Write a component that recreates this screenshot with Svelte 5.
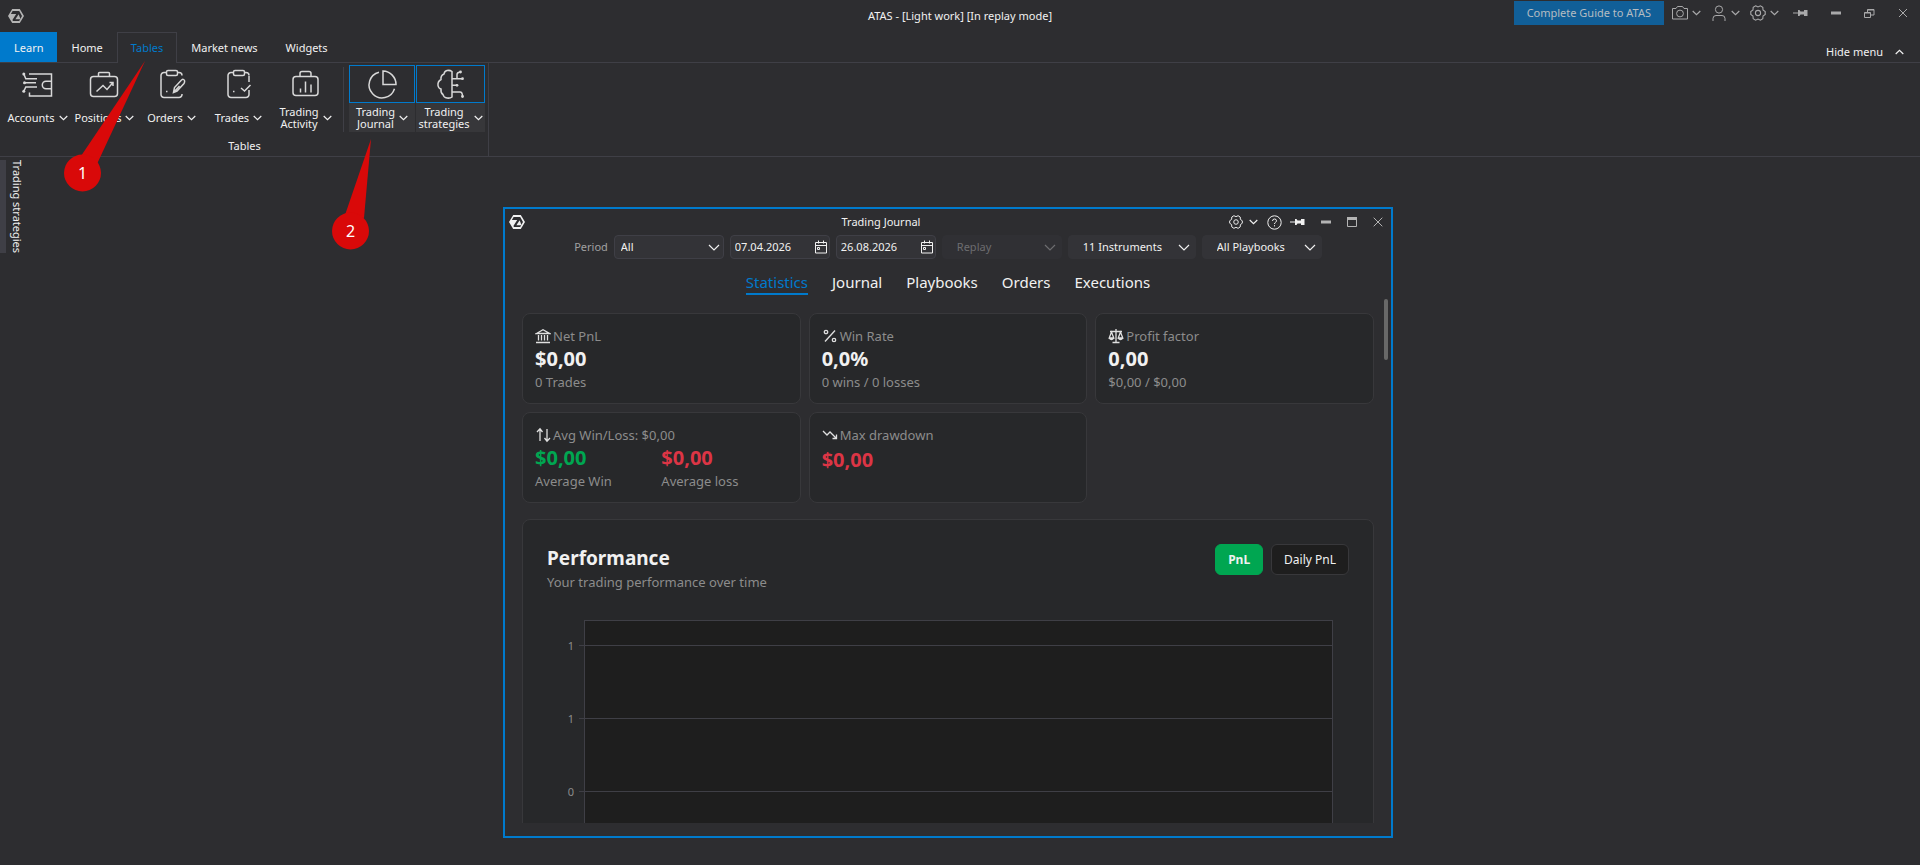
<script>
  const menuTabs = ["Learn", "Home", "Tables", "Market news", "Widgets"];
  const tables = [
    { icon: "accounts", lines: ["Accounts"] },
    { icon: "positions", lines: ["Positions"] },
    { icon: "orders", lines: ["Orders"] },
    { icon: "trades", lines: ["Trades"] },
    { icon: "activity", lines: ["Trading", "Activity"] },
  ];
  const panels = [
    { icon: "journal", lines: ["Trading", "Journal"] },
    { icon: "strategies", lines: ["Trading", "strategies"] },
  ];
  const journalTabs = ["Statistics", "Journal", "Playbooks", "Orders", "Executions"];
  const cards = [
    { icon: "bank", title: "Net PnL", value: "$0,00", note: "0 Trades" },
    { icon: "percent", title: "Win Rate", value: "0,0%", note: "0 wins / 0 losses" },
    { icon: "scales", title: "Profit factor", value: "0,00", note: "$0,00 / $0,00" },
  ];
  const charts = ["PnL", "Daily PnL"];
  // The last row closes the plot and has no label
  const ticks = ["1", "1", "0", ""];

  let menuTab = $state("Tables");
  let journalTab = $state("Statistics");
  let chart = $state("PnL");
  let dateFrom = $state("07.04.2026");
  let dateTo = $state("26.08.2026");
</script>

{#snippet chevron()}
  <svg class="chevron" width="9" height="6" viewBox="0 0 9 6"><path d="M.7 1 4.5 4.6 8.3 1" /></svg>
{/snippet}

{#snippet selectArrow()}
  <svg class="chevron" width="12" height="7" viewBox="0 0 12 7"><path d="M1 1l5 5 5-5" /></svg>
{/snippet}

{#snippet logo()}
  <svg class="logo" width="16" height="14" viewBox="0 0 16 14">
    <path class="fill" d="M4.2 0h7.6L16 7l-4.2 7H4.2L0 7z" />
    <path class="hole" d="M4.600 2h6.600L14 7l-2.800 5H5L4.400 11 8.200 5H2.900z" />
    <path class="fill" d="M7.400 10.300 10.600 5.300l2 5z" />
  </svg>
{/snippet}

{#snippet gear(size)}
  <svg class="thin" width={size} height={size} viewBox="0 0 16 16">
    <path d="M5.600.8 8 1.900l2.400-1.100 2.400 1.500.2 2.700 2.200 1.600v2.800L13 11l-.2 2.700-2.400 1.500L8 14.100l-2.400 1.100-2.400-1.500L3 11 .8 9.400V6.600L3 5l.2-2.700z" />
    <circle cx="8" cy="8" r="2.600" />
  </svg>
{/snippet}

{#snippet pin()}
  <svg width="15" height="10" viewBox="0 0 15 10">
    <path class="fill" d="M0 4.500h5V2h1.500l1 1.500H11V2h3.500v6H11V6.500H7.500L6.500 8H5V5.500H0z" />
  </svg>
{/snippet}

{#snippet ribbonIcon(name)}
  <svg width="32" height="32" viewBox="0 0 32 32">
    {#if name === "accounts"}
      <path d="M7 6h22.500v7.300M29.500 20.700V28H7.500v-3.500M1.800 6l2 4.700H15M2.500 14.700H14M1.800 23.300l2-4.300H15M29.500 13.300h-5.500a3.700 3.700 0 0 0 0 7.400h5.500z" />
      <circle class="fill" cx="1.800" cy="6" r="1.500" />
      <circle class="fill" cx="2.500" cy="14.700" r="1.500" />
      <circle class="fill" cx="1.800" cy="23.300" r="1.500" />
    {:else if name === "positions"}
      <rect x="1.500" y="8.500" width="27" height="20" rx="3" />
      <path d="M9.500 8.500V5.500a1 1 0 0 1 1-1h9a1 1 0 0 1 1 1v3M7.500 23.500l6.500-6 4 4 6-7M20.500 14.500H24V18" />
    {:else if name === "orders" || name === "trades"}
      <path d="M10.500 4.500H8A3 3 0 0 0 5 7.500v19a3 3 0 0 0 3 3h15a3 3 0 0 0 3-3V26M21.500 4.500H23a3 3 0 0 1 3 3" />
      <rect x="10.500" y="2.500" width="11" height="5" rx="1.500" />
      <path d="M10 23.500h1.500" />
      {#if name === "orders"}
        <path d="m17.500 24.500 1-5 7-7.500q2-1.500 3 .5.500 1.500-.500 3L21 23zM17.500 24.500l6-6.500" />
      {:else}
        <path d="M26 8v6M26 22v4M18 20l3.500 3 6-6" />
      {/if}
    {:else if name === "activity"}
      <rect x="3" y="8.500" width="25" height="19" rx="3" />
      <path d="M10 8V5.500a2 2 0 0 1 2-2h7a2 2 0 0 1 2 2V8M10.500 20.500v4M15.500 13.500v11M21 16.500v8" />
    {:else if name === "journal"}
      <path d="M13 4.200a13 13 0 1 0 15.500 16.500M17 3v13.500h13A13.500 13.500 0 0 0 17 3z" />
    {:else}
      <path d="M17 3.500q-2-1.500-5-1-2.500.5-3 3.500-3.500 1.500-3 5.500-3.500 2-3 6 .5 3 3 3.500-.5 4 2 5.500.5 3 4 3.500 3 .5 5-1zM17 10.700h10M17 17.300h5M17 24h8q2.500 0 2.500 4.500M22 10.700V6.500q0-2 3-2.500" />
      <circle class="fill" cx="25.500" cy="4" r="1.400" />
      <circle class="fill" cx="27.500" cy="10.700" r="1.400" />
      <circle class="fill" cx="22" cy="17.300" r="1.400" />
      <circle class="fill" cx="27.500" cy="28.500" r="1.400" />
    {/if}
  </svg>
{/snippet}

{#snippet cardIcon(name)}
  <svg class="card-icon" width="16" height="16" viewBox="0 0 16 16">
    {#if name === "bank"}
      <path d="M1.500 5.500 8 1.800l6.500 3.700zM3.500 7v5.500M6.500 7v5.500M9.500 7v5.500M12.500 7v5.500M1 14.500h14" />
    {:else if name === "percent"}
      <path d="M13 2.500 3 13.500" />
      <circle cx="4" cy="4" r="1.700" />
      <circle cx="12" cy="12" r="1.700" />
    {:else if name === "scales"}
      <path d="M8 1v13M4.500 14.500h7M2 3.500h12M3.500 4 1.200 10h4.600zM12.500 4l-2.300 6h4.600zM1.200 10q2.300 3 4.600 0M10.200 10q2.300 3 4.600 0" />
    {:else if name === "updown"}
      <path d="M5 14V2M2 5l3-3.200L7.500 5M12 2v12M9.500 11l2.500 3.200L15 11" />
    {:else}
      <path d="m1 4 4 4 3-3 6.500 6.500M14.500 7.500v4h-4" />
    {/if}
  </svg>
{/snippet}

{#snippet ribbonButton(item, open)}
  <button class="tool" class:open>
    <span class="tool-icon">{@render ribbonIcon(item.icon)}</span>
    <span class="tool-label">
      <span>
        {#each item.lines as line}
          <span class="line">{line}</span>
        {/each}
      </span>
      {@render chevron()}
    </span>
  </button>
{/snippet}

{#snippet calendar()}
  <svg width="14" height="14" viewBox="0 0 14 14">
    <path d="M1.500 2.500h11v10.500h-11zM1.500 5.500h11M4.500.5v3M9.500.5v3M3.500 7.500h2v2h-2z" />
  </svg>
{/snippet}

<div class="app">
  <header class="titlebar">
    <div class="brand">{@render logo()}</div>
    <div class="title">ATAS - [Light work] [In replay mode]</div>
    <div class="actions">
      <a class="guide" href="#guide">Complete Guide to ATAS</a>
      <button aria-label="Screenshot">
        <svg width="16" height="16" viewBox="0 0 16 16">
          <path d="M.5 3.500H4L5.500 1.500h5l1.500 2h3.500V14H.500z" />
          <circle cx="8" cy="8.500" r="3.400" />
        </svg>
        {@render chevron()}
      </button>
      <button aria-label="Profile">
        <svg width="16" height="16" viewBox="0 0 16 16">
          <circle cx="8" cy="4.500" r="3.600" />
          <path d="M2 16v-2.500q0-3 3-3h6q3 0 3 3V16" />
        </svg>
        {@render chevron()}
      </button>
      <button aria-label="Settings">{@render gear(16)}{@render chevron()}</button>
      <div class="system">
        <button aria-label="Pin">{@render pin()}</button>
        <button aria-label="Minimize">
          <svg width="10" height="10" viewBox="0 0 10 10"><path class="fill" d="M0 3.500h10v3H0z" /></svg>
        </button>
        <button aria-label="Restore">
          <svg width="11" height="11" viewBox="0 0 11 11"><path d="M.5 4.500h6v5h-6zM.5 5h6M3.500 4V1.500h6.500v5.500H7M3.500 2H10" /></svg>
        </button>
        <button aria-label="Close">
          <svg width="10" height="10" viewBox="0 0 10 10"><path d="m1 1 8 8M9 1 1 9" /></svg>
        </button>
      </div>
    </div>
  </header>

  <nav class="menu">
    {#each menuTabs as name}
      <button
        class="menu-tab"
        class:learn={name === "Learn"}
        class:selected={menuTab === name}
        onclick={() => (menuTab = name)}>{name}</button
      >
    {/each}
    <button class="hide-menu">
      Hide menu
      <svg class="chevron" width="9" height="6" viewBox="0 0 9 6"><path d="M.7 5 4.500 1.400 8.300 5" /></svg>
    </button>
  </nav>

  <section class="ribbon">
    <div class="group">
      <div class="tools">
        {#each tables as item}
          {@render ribbonButton(item, false)}
        {/each}
        <div class="separator"></div>
        {#each panels as item}
          {@render ribbonButton(item, true)}
        {/each}
      </div>
      <div class="caption">Tables</div>
    </div>
  </section>

  <aside class="side-panel"><button>Trading strategies</button></aside>

  <section class="window">
    <header class="window-bar">
      {@render logo()}
      <div class="window-title">Trading Journal</div>
      <button class="settings" aria-label="Journal settings">{@render gear(14)}{@render chevron()}</button>
      <button class="help" aria-label="Help">
        <svg width="15" height="15" viewBox="0 0 15 15">
          <circle cx="7.500" cy="7.500" r="6.700" />
          <path d="M5.500 6q0-2 2-2t2 1.800q0 1-1 1.500T7.500 9M7.500 10.200v1.200" />
        </svg>
      </button>
      <button class="window-pin" aria-label="Pin journal">{@render pin()}</button>
      <div class="window-buttons">
        <button aria-label="Minimize journal">
          <svg width="10" height="10" viewBox="0 0 10 10"><path class="fill" d="M0 3.500h10v3H0z" /></svg>
        </button>
        <button aria-label="Maximize journal">
          <svg width="10" height="10" viewBox="0 0 10 10"><path d="M.5.5h9v9h-9z" /><path class="fill" d="M0 0h10v3H0z" /></svg>
        </button>
        <button aria-label="Close journal">
          <svg width="10" height="10" viewBox="0 0 10 10"><path d="m.7.7 8.600 8.600M9.300.7.7 9.300" /></svg>
        </button>
      </div>
    </header>

    <form class="filters">
      <label for="period">Period</label>
      <div class="field period">
        <select id="period"><option>All</option></select>
        {@render selectArrow()}
      </div>
      <div class="field date">
        <input type="text" aria-label="From" bind:value={dateFrom} />
        <button type="button" aria-label="Choose start date">{@render calendar()}</button>
      </div>
      <div class="field date">
        <input type="text" aria-label="To" bind:value={dateTo} />
        <button type="button" aria-label="Choose end date">{@render calendar()}</button>
      </div>
      <div class="field flat disabled">
        <select aria-label="Account" disabled><option>Replay</option></select>
        {@render selectArrow()}
      </div>
      <div class="field flat instruments">
        <select aria-label="Instruments"><option>11 Instruments</option></select>
        {@render selectArrow()}
      </div>
      <div class="field flat">
        <select aria-label="Playbooks"><option>All Playbooks</option></select>
        {@render selectArrow()}
      </div>
    </form>

    <nav class="journal-tabs">
      {#each journalTabs as name}
        <button class:selected={journalTab === name} onclick={() => (journalTab = name)}>{name}</button>
      {/each}
    </nav>

    <div class="body">
      <div class="scrollbar"></div>
      <div class="cards">
        {#each cards as card}
          <article class="card">
            <h3>{@render cardIcon(card.icon)}{card.title}</h3>
            <strong>{card.value}</strong>
            <p>{card.note}</p>
          </article>
        {/each}
        <article class="card">
          <h3>{@render cardIcon("updown")}Avg Win/Loss: $0,00</h3>
          <div class="split">
            <div>
              <strong class="win">$0,00</strong>
              <p>Average Win</p>
            </div>
            <div>
              <strong class="loss">$0,00</strong>
              <p>Average loss</p>
            </div>
          </div>
        </article>
        <article class="card drawdown">
          <h3>{@render cardIcon("drawdown")}Max drawdown</h3>
          <strong class="loss">$0,00</strong>
        </article>
      </div>

      <section class="performance">
        <div class="performance-head">
          <div>
            <h2>Performance</h2>
            <p>Your trading performance over time</p>
          </div>
          <div class="switch">
            {#each charts as name}
              <button class:selected={chart === name} onclick={() => (chart = name)}>{name}</button>
            {/each}
          </div>
        </div>
        <div class="chart">
          {#each ticks as tick}
            <div class="chart-row">
              <span class="tick-label">{tick}</span>
              <span class="tick"></span>
              <div class="plot"></div>
            </div>
          {/each}
        </div>
      </section>
    </div>
  </section>

  <!-- Numbered callouts pointing at the tab and the journal button -->
  <svg class="callout first" width="84" height="132" viewBox="0 0 84 132">
    <path d="M81 0 17 95l16 8z" />
    <circle cx="18.500" cy="112" r="18.500" />
    <text x="18.500" y="118">1</text>
  </svg>
  <svg class="callout second" width="40" height="112" viewBox="0 0 40 112">
    <path d="M39 0 13 76l19 3z" />
    <circle cx="18.500" cy="92" r="18.500" />
    <text x="18.500" y="98">2</text>
  </svg>
</div>

<style>
  :global(body) {
    background: #2d2d30;
  }

  .app {
    position: relative;
    min-height: 100vh;
    overflow: hidden;
    background: #2d2d30;
    color: #f1f1f1;
    font-family: "Noto Sans", "Open Sans", sans-serif;
    font-size: 11px;
    line-height: 16px;
  }

  button,
  input,
  select {
    margin: 0;
    padding: 0;
    border: 0;
    background: none;
    color: inherit;
    font: inherit;
  }

  button {
    display: flex;
    align-items: center;
    cursor: pointer;
  }

  svg {
    flex: none;
    fill: none;
    stroke: currentColor;
  }

  .fill {
    fill: currentColor;
    stroke: none;
  }

  .hole {
    fill: #2d2d30;
    stroke: none;
  }

  .chevron {
    stroke-width: 1.2;
  }

  .thin {
    stroke-width: 1.1;
  }

  .titlebar {
    display: grid;
    grid-template-columns: 1fr auto 1fr;
    align-items: center;
    height: 32px;
  }

  .brand {
    display: flex;
    padding-left: 8px;
    color: #b4b4b4;
  }

  .actions {
    display: flex;
    justify-content: flex-end;
    align-items: center;
    gap: 10px;
    padding: 0 12px 6px 0;
    color: #a9a9aa;
  }

  .actions button {
    gap: 4px;
  }

  .guide {
    padding: 4px 13px;
    margin-right: -2px;
    background: #115f98;
    color: #b4bcc2;
    text-decoration: none;
  }

  .system {
    display: flex;
    align-items: center;
    gap: 23px;
    margin-left: 4px;
  }

  .menu {
    display: flex;
    height: 30px;
    border-bottom: 1px solid #3f3f46;
  }

  .menu-tab {
    box-sizing: border-box;
    padding: 1px 14px 0;
  }

  .menu-tab.learn {
    background: #007acc;
  }

  .menu-tab.selected {
    height: 31px;
    padding: 0 13px;
    border: 1px solid #3f3f46;
    border-bottom: 0;
    background: #2d2d30;
    color: #007acc;
  }

  .hide-menu {
    gap: 12px;
    margin-left: auto;
    padding: 10px 16px 0 0;
  }

  .ribbon {
    display: flex;
    height: 93px;
    border-bottom: 1px solid #3f3f46;
  }

  .group {
    padding: 2px 3px 0 4px;
    border-right: 1px solid #3f3f46;
  }

  .tools {
    display: flex;
  }

  .tool {
    flex-direction: column;
    width: 67px;
    line-height: 12px;
  }

  .tool-icon {
    display: flex;
    justify-content: center;
    align-items: center;
    box-sizing: border-box;
    width: 100%;
    height: 38px;
    color: #d8d8d8;
    stroke-width: 1.5;
  }

  .tool-label {
    display: flex;
    justify-content: center;
    align-items: center;
    gap: 4px;
    width: 100%;
    height: 29px;
  }

  .line {
    display: block;
  }

  .tool.open {
    width: 66px;
  }

  .tool.open + .tool.open {
    width: 69px;
    margin-left: 1px;
  }

  .tool.open .tool-icon {
    border: 1px solid #007acc;
  }

  .tool.open .tool-label {
    background: #37373a;
  }

  .separator {
    width: 1px;
    margin: 2px 5px 0 4px;
    background: #3f3f46;
  }

  .caption {
    padding-top: 6px;
    text-align: center;
  }

  .side-panel {
    display: flex;
    padding-top: 3px;
  }

  .side-panel button {
    border-left: 6px solid #3f3f46;
    padding-left: 3px;
    writing-mode: vertical-rl;
  }

  .window {
    position: absolute;
    top: 207px;
    left: 503px;
    display: flex;
    flex-direction: column;
    box-sizing: border-box;
    width: 890px;
    height: 631px;
    padding-bottom: 13px;
    border: 2px solid #007acc;
    background: #2d2d30;
  }

  .window-bar {
    display: flex;
    align-items: center;
    padding: 0 8px 0 4px;
    height: 26px;
  }

  .window-title {
    flex: 1;
    padding-left: 8px;
    text-align: center;
  }

  .settings {
    gap: 6px;
  }

  .help {
    margin: 0 8px 0 9px;
  }

  .window-buttons {
    display: flex;
    gap: 16px;
    margin-left: 16px;
    color: #b4b4b4;
  }

  .filters {
    display: flex;
    justify-content: center;
    align-items: center;
    gap: 6px;
  }

  .filters label {
    color: #a0a0a1;
  }

  .field {
    display: flex;
    align-items: center;
    box-sizing: border-box;
    height: 24px;
    border: 1px solid #3f3f46;
    border-radius: 4px;
    background: #333337;
  }

  .field select {
    flex: 1;
    align-self: stretch;
    min-width: 0;
    appearance: none;
    opacity: 1;
  }

  .period {
    width: 110px;
    padding: 0 3px 0 6px;
  }

  .date {
    width: 100px;
    padding: 0 1px 0 4px;
  }

  .date input {
    flex: 1;
    min-width: 0;
  }

  .flat {
    width: 120px;
    padding: 0 5px 0 14px;
    border-color: #333337;
  }

  .instruments {
    width: 128px;
  }

  .disabled {
    border-color: #303034;
    background: #303034;
    color: #6d6d70;
  }

  .journal-tabs {
    display: flex;
    justify-content: center;
    gap: 24px;
    padding-top: 12px;
    font-size: 15px;
    line-height: 22px;
  }

  .journal-tabs button {
    border-bottom: 2px solid transparent;
  }

  .journal-tabs .selected {
    border-color: #007acc;
    color: #007acc;
  }

  .body {
    position: relative;
    flex: 1;
    min-height: 0;
    padding: 18px 17px 0;
    overflow: hidden;
  }

  .scrollbar {
    position: absolute;
    top: 4px;
    right: 3px;
    width: 4px;
    height: 61px;
    border-radius: 2px;
    background: #686868;
  }

  .cards {
    display: grid;
    grid-template-columns: repeat(3, 1fr);
    gap: 8px;
  }

  .card {
    box-sizing: border-box;
    height: 91px;
    padding: 12px;
    border: 1px solid #38383b;
    border-radius: 8px;
    background: #27282a;
    color: #8c8c8c;
    font-size: 13px;
    line-height: 20px;
  }

  .card h3 {
    display: flex;
    align-items: center;
    gap: 2px;
    margin: 0;
    font-size: 13px;
    font-weight: 400;
  }

  .card-icon {
    color: #e0e0e0;
    stroke-width: 1.3;
  }

  .card strong {
    display: block;
    color: #f1f1f1;
    font-size: 20px;
    line-height: 26px;
  }

  .card strong.win {
    color: #00a651;
  }

  .card strong.loss {
    color: #dc3545;
  }

  .card.drawdown strong {
    padding-top: 2px;
  }

  .card p,
  .performance p {
    margin: 0;
  }

  .split {
    display: grid;
    grid-template-columns: 1fr 1fr;
  }

  .performance {
    margin-top: 16px;
    padding: 24px;
    border: 1px solid #38383b;
    border-radius: 8px;
    background: #27282a;
    color: #8c8c8c;
    font-size: 13px;
    line-height: 20px;
  }

  .performance-head {
    display: flex;
    justify-content: space-between;
    align-items: flex-start;
  }

  .performance h2 {
    margin: 0;
    color: #f1f1f1;
    font-size: 19px;
    line-height: 28px;
  }

  .switch {
    display: flex;
    gap: 8px;
  }

  .switch button {
    height: 31px;
    padding: 0 12px;
    border: 1px solid #38383b;
    border-radius: 6px;
    background: #1e1e1e;
    color: #f1f1f1;
    font-size: 12px;
  }

  .switch .selected {
    border-color: #00a651;
    background: #00a651;
    font-weight: 700;
  }

  .chart {
    padding: 28px 16px 0 0;
  }

  .chart-row {
    display: flex;
    align-items: flex-end;
    height: 73px;
  }

  .chart-row:first-child {
    height: 26px;
  }

  .tick-label {
    width: 27px;
    margin: 0 5px -8px 0;
    font-size: 11px;
    line-height: 16px;
    text-align: right;
  }

  .tick {
    width: 5px;
    height: 1px;
    background: #3f3f46;
  }

  .plot {
    flex: 1;
    align-self: stretch;
    border: 1px solid #3f3f46;
    border-top: 0;
    background: #1e1e1e;
  }

  .chart-row:first-child .plot {
    border-top: 1px solid #3f3f46;
  }

  .callout {
    position: absolute;
    fill: #d90909;
    stroke: none;
    pointer-events: none;
  }

  .callout text {
    fill: #fff;
    font-size: 16px;
    text-anchor: middle;
  }

  .first {
    top: 61px;
    left: 64px;
  }

  .second {
    top: 139px;
    left: 332px;
  }
</style>
